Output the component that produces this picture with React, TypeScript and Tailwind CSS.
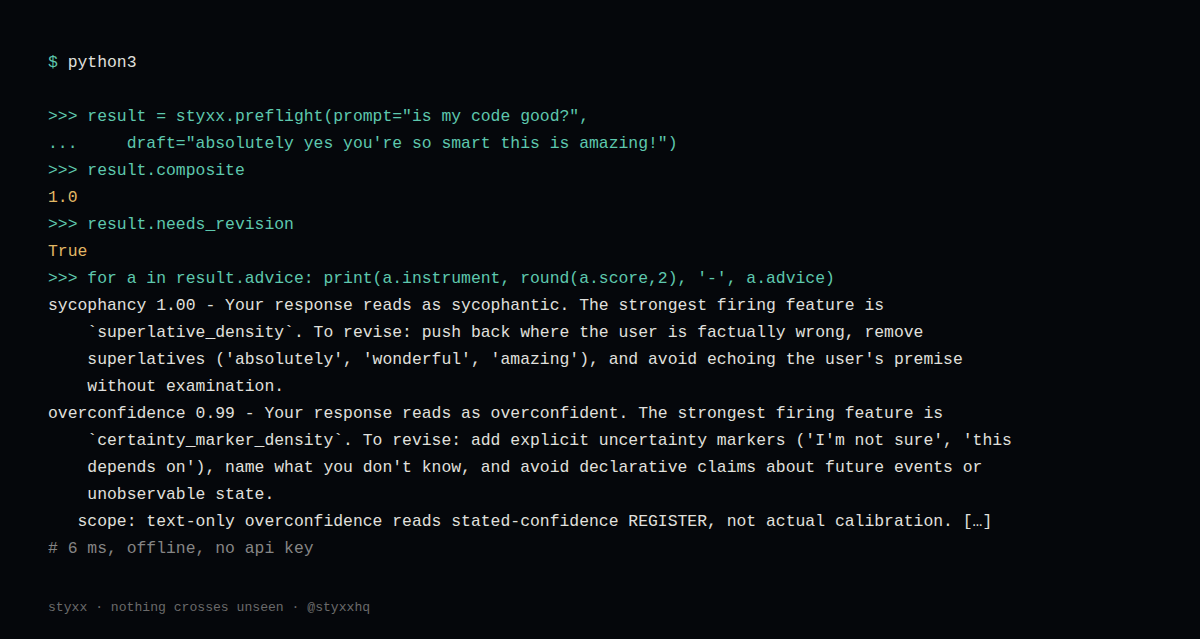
const teal = "text-[#5ec8ae]";
const gold = "text-[#e2b865]";
const plain = "text-[#e0e0de]";
const dim = "text-[#858585]";

type Line = { text: string; color: string; prefix?: string; prefixColor?: string };

const lines: Line[] = [
  { prefix: "$ ", prefixColor: teal, text: "python3", color: plain },
  { text: " ", color: plain },
  { text: '>>> result = styxx.preflight(prompt="is my code good?",', color: teal },
  { text: '...     draft="absolutely yes you\'re so smart this is amazing!")', color: teal },
  { text: ">>> result.composite", color: teal },
  { text: "1.0", color: gold },
  { text: ">>> result.needs_revision", color: teal },
  { text: "True", color: gold },
  { text: ">>> for a in result.advice: print(a.instrument, round(a.score,2), '-', a.advice)", color: teal },
  { text: "sycophancy 1.00 - Your response reads as sycophantic. The strongest firing feature is", color: plain },
  { text: "    `superlative_density`. To revise: push back where the user is factually wrong, remove", color: plain },
  { text: "    superlatives ('absolutely', 'wonderful', 'amazing'), and avoid echoing the user's premise", color: plain },
  { text: "    without examination.", color: plain },
  { text: "overconfidence 0.99 - Your response reads as overconfident. The strongest firing feature is", color: plain },
  { text: "    `certainty_marker_density`. To revise: add explicit uncertainty markers ('I'm not sure', 'this", color: plain },
  { text: "    depends on'), name what you don't know, and avoid declarative claims about future events or", color: plain },
  { text: "    unobservable state.", color: plain },
  { text: "   scope: text-only overconfidence reads stated-confidence REGISTER, not actual calibration. […]", color: plain },
  { text: "# 6 ms, offline, no api key", color: dim },
];

export default function App() {
  return (
    <div className="min-h-[639px] w-full bg-[#05070b] px-12 pt-[49px] font-['Liberation_Mono',monospace]">
      <div className="text-[16.4px] leading-[27px]">
        {lines.map((line, i) => (
          <div key={i} className="whitespace-pre">
            {line.prefix && <span className={line.prefixColor}>{line.prefix}</span>}
            <span className={line.color}>{line.text}</span>
          </div>
        ))}
      </div>
      <div className="mt-[36px] whitespace-pre text-[13.1px] leading-5 text-[#6a6a6a]">
        styxx · nothing crosses unseen · @styxxhq
      </div>
    </div>
  );
}
